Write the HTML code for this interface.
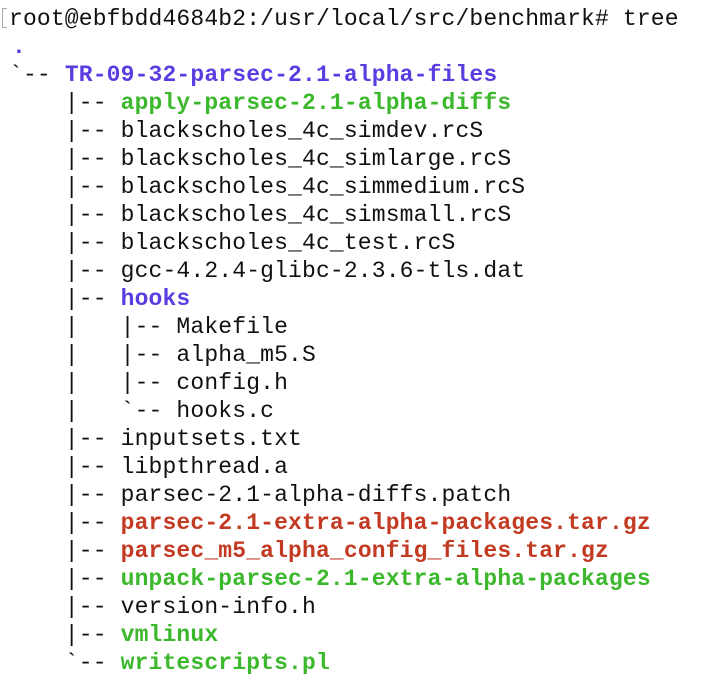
<!DOCTYPE html>
<html><head><style>
body{margin:0;background:#fff;width:706px;height:680px;overflow:hidden}
pre{margin:0;position:absolute;left:9px;top:5px;font-family:"Liberation Mono",monospace;font-size:23px;line-height:28px;color:#111;letter-spacing:0.15px}
.p{color:#5b3ce0;font-weight:bold}.g{color:#3cb82c;font-weight:bold}.r{color:#c23a22;font-weight:bold}
.b{position:absolute;left:2px;top:8px;width:5px;height:20px;border:1.5px solid #aaa;border-right:none;box-sizing:border-box}
.d{position:relative;left:3px}
</style></head><body>
<pre>root@ebfbdd4684b2:/usr/local/src/benchmark# tree
<span class="p d">.</span>
`-- <span class="p">TR-09-32-parsec-2.1-alpha-files</span>
    |-- <span class="g">apply-parsec-2.1-alpha-diffs</span>
    |-- blackscholes_4c_simdev.rcS
    |-- blackscholes_4c_simlarge.rcS
    |-- blackscholes_4c_simmedium.rcS
    |-- blackscholes_4c_simsmall.rcS
    |-- blackscholes_4c_test.rcS
    |-- gcc-4.2.4-glibc-2.3.6-tls.dat
    |-- <span class="p">hooks</span>
    |   |-- Makefile
    |   |-- alpha_m5.S
    |   |-- config.h
    |   `-- hooks.c
    |-- inputsets.txt
    |-- libpthread.a
    |-- parsec-2.1-alpha-diffs.patch
    |-- <span class="r">parsec-2.1-extra-alpha-packages.tar.gz</span>
    |-- <span class="r">parsec_m5_alpha_config_files.tar.gz</span>
    |-- <span class="g">unpack-parsec-2.1-extra-alpha-packages</span>
    |-- version-info.h
    |-- <span class="g">vmlinux</span>
    `-- <span class="g">writescripts.pl</span></pre>
<div class="b"></div>
</body></html>
